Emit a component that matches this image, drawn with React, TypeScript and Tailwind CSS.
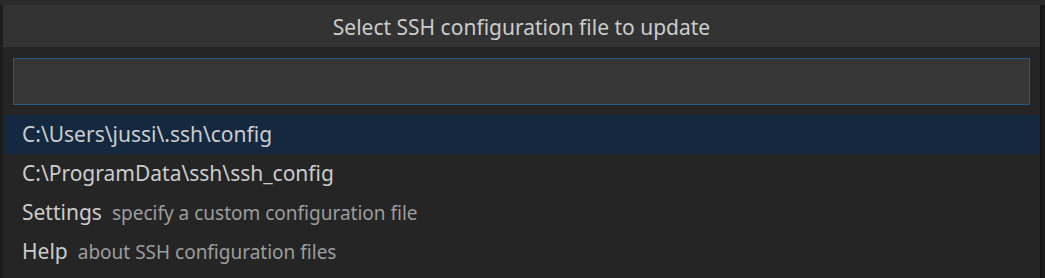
const items = [
  { label: 'C:\\Users\\jussi\\.ssh\\config', selected: true },
  { label: 'C:\\ProgramData\\ssh\\ssh_config' },
  { label: 'Settings', description: 'specify a custom configuration file' },
  { label: 'Help', description: 'about SSH configuration files' },
];

export default function App() {
  return (
    <div
      className="w-[1045px] h-[278px] overflow-hidden bg-[#1e1e1e] flex flex-col"
      style={{ fontFamily: '"Noto Sans", "Open Sans", sans-serif' }}
    >
      <div className="h-[5px] bg-[#2b2b2b] shrink-0" />
      <div className="flex flex-1 min-h-0">
        <div className="w-[3px] shrink-0 bg-[#1e1e1e]" />
        <div className="w-[1037px] shrink-0 flex flex-col bg-[#252526]">
          <div className="h-[42px] pt-[4px] bg-[#333333] flex items-center justify-center text-[21px] text-[#cccccc]">
            Select SSH configuration file to update
          </div>
          <div className="pt-[11px] pb-[10px] px-[10px]">
            <div className="h-[47px] bg-[#363636] border border-[#1f5a91]" />
          </div>
          <div className="flex flex-col">
            {items.map((item, i) => (
              <div
                key={i}
                className={`h-[39px] pt-[1px] flex items-center px-[19px] gap-[10px] text-[21px] ${
                  item.selected ? 'bg-[#14283f]' : ''
                }`}
              >
                <span className="text-[#cccccc]">{item.label}</span>
                {item.description && (
                  <span className="text-[19px] text-[#9d9d9d]">{item.description}</span>
                )}
              </div>
            ))}
          </div>
        </div>
        <div className="flex-1 bg-[#1a1a1a] border-l border-[#111111]" />
      </div>
    </div>
  );
}
